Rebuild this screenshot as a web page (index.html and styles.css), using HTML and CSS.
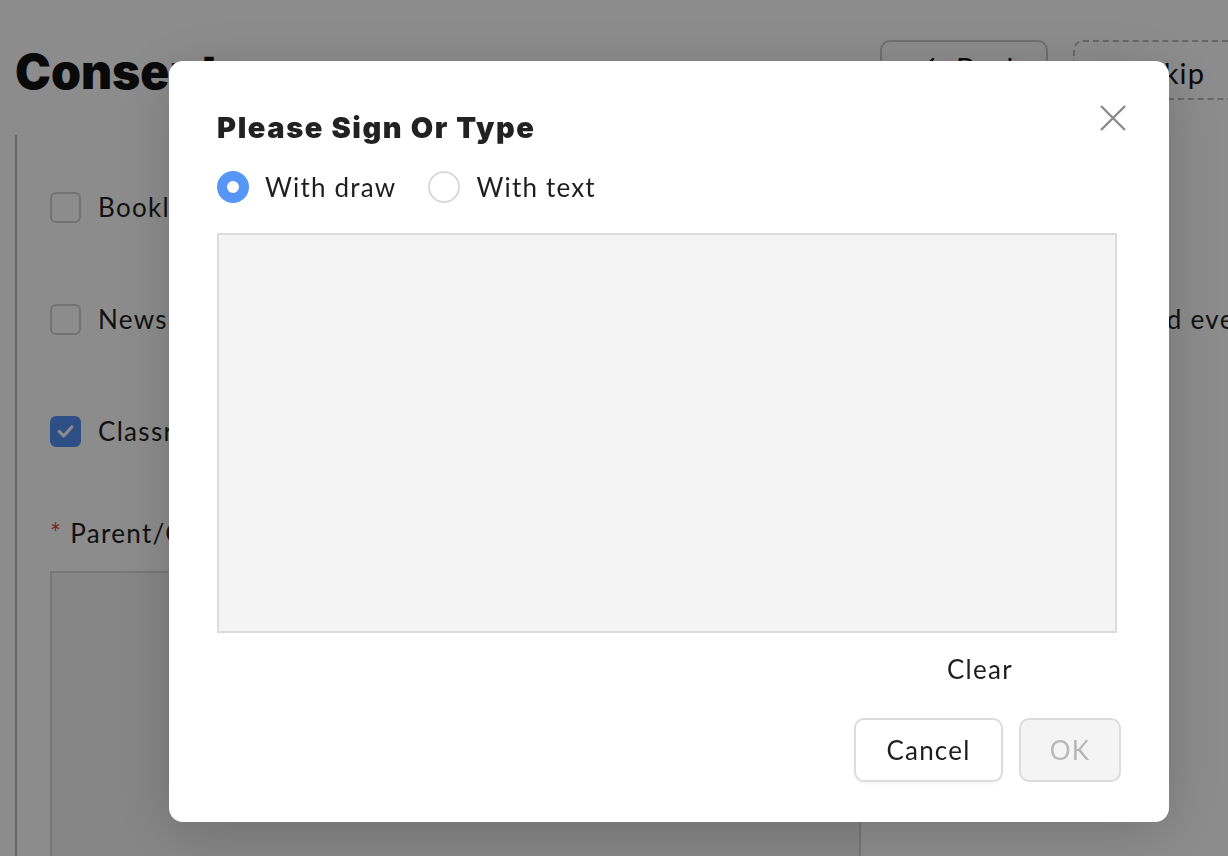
FILE: index.html
```html
<!DOCTYPE html>
<html>
<head>
<meta charset="utf-8">
<link rel="stylesheet" href="styles.css">
</head>
<body>
<div class="page">
  <header class="top">
    <h1 class="page-title">Consent</h1>
    <div class="top-actions">
      <button class="btn-back"><svg class="ico" viewBox="0 0 24 24" width="24" height="24"><path d="M15 4L7 12l8 8" fill="none" stroke="#111" stroke-width="2.4" stroke-linecap="round" stroke-linejoin="round"/></svg>Back</button>
      <button class="btn-skip"><svg class="ico" viewBox="0 0 24 24" width="24" height="24"><path d="M3 12h17M13 5l7 7-7 7" fill="none" stroke="#111" stroke-width="2.4" stroke-linecap="round" stroke-linejoin="round"/></svg>Skip</button>
    </div>
  </header>
  <div class="panel">
    <div class="row"><span class="cb"></span><span class="row-text">Booklet, yearbook and printed school publications</span></div>
    <div class="row"><span class="cb"></span><span class="row-text">Newsletters, school website, social media and printed posts about class activities, and events</span></div>
    <div class="row"><span class="cb checked"><svg viewBox="0 0 30 30" width="30" height="30"><path d="M8 15.5l5 5 9-10" fill="none" stroke="#fff" stroke-width="3.4" stroke-linecap="round" stroke-linejoin="round"/></svg></span><span class="row-text">Classroom displays and learning materials</span></div>
    <div class="label"><span class="req">*</span> Parent/Guardian Signature</div>
    <div class="sig-box"></div>
  </div>
</div>

<div class="overlay">
  <div class="modal">
    <div class="modal-head">
      <h2 class="modal-title">Please Sign Or Type</h2>
      <span class="close"><svg viewBox="0 0 28 28" width="28" height="28"><path d="M2 2L26 26M26 2L2 26" stroke="#8a8a8a" stroke-width="2.4" fill="none"/></svg></span>
    </div>
    <div class="radios">
      <label class="radio"><span class="dot on"></span>With draw</label>
      <label class="radio"><span class="dot"></span>With text</label>
    </div>
    <div class="canvas"></div>
    <div class="clear-row"><span class="clear">Clear</span></div>
    <div class="footer">
      <button class="btn cancel">Cancel</button>
      <button class="btn ok">OK</button>
    </div>
  </div>
</div>
</body>
</html>
```

FILE: styles.css
```css
* { box-sizing: border-box; }
html, body { margin: 0; padding: 0; }
body {
  width: 1228px;
  height: 856px;
  overflow: hidden;
  background: #fff;
  font-family: "Lato", "Open Sans", sans-serif;
  color: #1e1e1e;
}
.page { padding: 40px 0 0 15px; height: 856px; overflow: hidden; }
.top {
  display: flex;
  justify-content: space-between;
  align-items: flex-start;
  height: 95px;
}
.page-title {
  margin: 2px 0 0;
  font-family: "Inter", "Lato", sans-serif;
  font-size: 48px;
  font-weight: 900;
  letter-spacing: 0;
  color: #111;
}
.top-actions { display: flex; gap: 25px; margin-right: -60px; }
.top-actions button {
  height: 60px;
  border-radius: 10px;
  background: #fff;
  font-family: inherit;
  font-size: 29px;
  letter-spacing: 1.2px;
  color: #111;
  display: flex;
  align-items: center;
}
.btn-back { width: 168px; border: 2px solid #ccc; padding: 0 0 6px 36px; }
.btn-skip { width: 215px; border: 2px dashed #bbb; padding: 4px 0 0 40px; }
.ico { margin-right: 14px; flex: none; }
.btn-skip .ico { margin-right: 8px; }
.panel {
  border-left: 2px solid #bdbdbd;
  padding: 16px 0 0 33px;
  height: 800px;
}
.row {
  display: flex;
  align-items: center;
  gap: 17px;
  height: 112px;
  white-space: nowrap;
}
.cb {
  width: 31px;
  height: 31px;
  border: 2px solid #d0d0d0;
  border-radius: 6px;
  display: flex;
  align-items: center;
  justify-content: center;
  flex: none;
}
.cb.checked { background: #5591f5; border-color: #5591f5; }
.row-text { font-size: 26px; letter-spacing: 1.3px; }
.label { font-size: 26px; letter-spacing: 1.3px; margin-top: 30px; }
.req { color: #e0413a; }
.sig-box {
  margin-top: 22px;
  width: 811px;
  height: 400px;
  border: 2px solid #d9d9d9;
  background: #f4f4f4;
}

.overlay {
  position: fixed;
  inset: 0;
  background: rgba(0, 0, 0, 0.45);
  padding: 61px 0 0 169px;
}
.modal {
  width: 1000px;
  height: 761px;
  background: #fff;
  border-radius: 14px;
  box-shadow: 0 10px 60px rgba(0, 0, 0, 0.18);
  padding: 44px 48px 0 48px;
}
.modal-head {
  display: flex;
  justify-content: space-between;
  align-items: center;
  height: 44px;
}
.modal-title {
  margin: 0;
  font-family: "Inter", "Lato", sans-serif;
  font-size: 29px;
  font-weight: 900;
  letter-spacing: 1.6px;
  color: #222;
}
.close { margin-right: -6px; margin-top: -18px; display: flex; }
.radios {
  display: flex;
  gap: 32px;
  margin-top: 22px;
  height: 32px;
  align-items: center;
}
.radio {
  display: flex;
  align-items: center;
  gap: 16px;
  font-size: 26px;
  letter-spacing: 1.2px;
  color: #1e1e1e;
}
.dot {
  width: 32px;
  height: 32px;
  border-radius: 50%;
  border: 2px solid #d9d9d9;
  background: #fff;
}
.dot.on { border: 10px solid #5596f6; }
.canvas {
  margin-top: 30px;
  width: 900px;
  height: 400px;
  background: #f4f4f4;
  border: 2px solid #dcdcdc;
}
.clear-row {
  display: flex;
  justify-content: flex-end;
  padding-right: 108px;
  margin-top: 20px;
  height: 34px;
}
.clear { font-size: 26px; letter-spacing: 1.3px; color: #1e1e1e; }
.footer {
  display: flex;
  justify-content: flex-end;
  gap: 16px;
  margin-top: 31px;
}
.btn {
  height: 64px;
  border-radius: 10px;
  font-family: inherit;
  font-size: 26px;
  letter-spacing: 1.2px;
}
.cancel {
  width: 149px;
  background: #fff;
  border: 2px solid #dcdcdc;
  color: #1e1e1e;
  box-shadow: 0 2px 3px rgba(0, 0, 0, 0.04);
}
.ok {
  width: 102px;
  background: #f4f4f4;
  border: 2px solid #dcdcdc;
  color: #b8b8b8;
}
```
